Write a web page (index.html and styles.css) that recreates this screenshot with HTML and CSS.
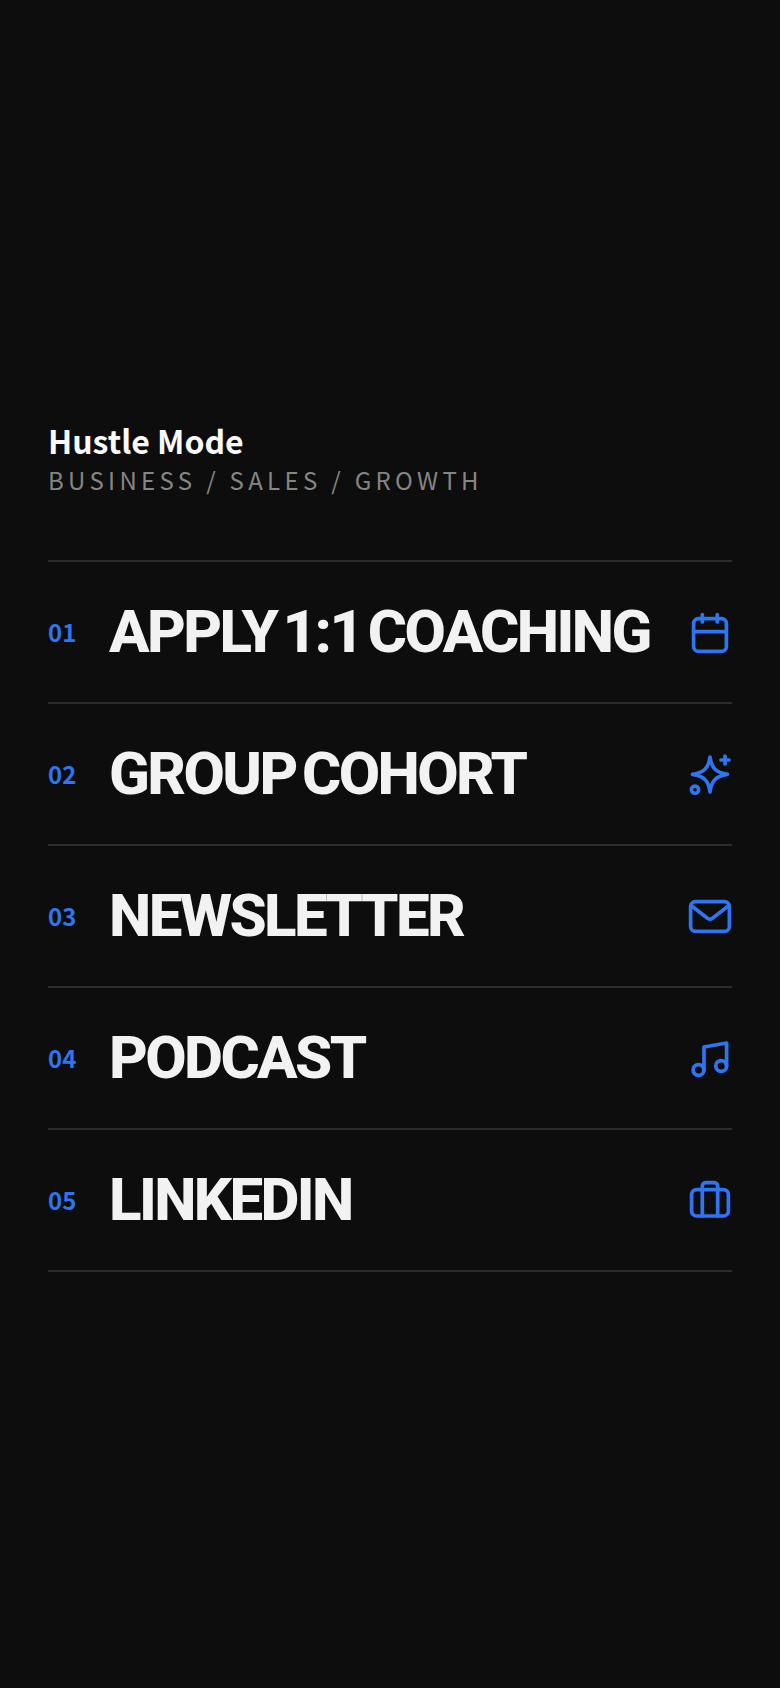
FILE: index.html
```html
<!DOCTYPE html>
<html lang="en">
<head>
<meta charset="utf-8">
<title>Hustle Mode</title>
<link rel="stylesheet" href="styles.css">
</head>
<body>
<main class="page">
  <header class="intro">
    <h1 class="name">Hustle Mode</h1>
    <p class="tags">BUSINESS / SALES / GROWTH</p>
  </header>
  <nav class="links">
    <a class="row" href="#">
      <span class="num">01</span>
      <span class="label">APPLY 1:1 COACHING</span>
      <svg class="icon" viewBox="0 0 44 44"><rect x="5.6" y="8.6" width="32.8" height="32.8" rx="5"/><path d="M14.3 4.5V12M29.3 4.5V12M5.6 21.7H38.4"/></svg>
    </a>
    <a class="row" href="#">
      <span class="num">02</span>
      <span class="label">GROUP COHORT</span>
      <svg class="icon" viewBox="0 0 44 44"><path d="M22 5C23.4 15.5 27.5 20.8 39.5 22.3C27.5 24 23.4 29 22 40C20.6 29 16.5 24 4.5 22.3C16.5 20.8 20.6 15.5 22 5Z"/><path d="M37 4V12M33 8H41"/><circle cx="7" cy="37.7" r="3.6"/></svg>
    </a>
    <a class="row" href="#">
      <span class="num">03</span>
      <span class="label">NEWSLETTER</span>
      <svg class="icon" viewBox="0 0 44 44"><rect x="2.6" y="7.6" width="38.8" height="29.8" rx="5"/><path d="M3.7 12L19.5 24.2Q22 26 24.5 24.2L40.3 12"/></svg>
    </a>
    <a class="row" href="#">
      <span class="num">04</span>
      <span class="label">PODCAST</span>
      <svg class="icon" viewBox="0 0 44 44"><path d="M16 34V11L38.6 7V30"/><circle cx="10.5" cy="34" r="5.4"/><circle cx="33.2" cy="30" r="5.4"/></svg>
    </a>
    <a class="row" href="#">
      <span class="num">05</span>
      <span class="label">LINKEDIN</span>
      <svg class="icon" viewBox="0 0 44 44"><rect x="3.6" y="11.6" width="36.8" height="26.4" rx="5"/><path d="M14.3 38V8A3.4 3.4 0 0 1 17.7 4.6H26.3A3.4 3.4 0 0 1 29.7 8V38"/></svg>
    </a>
  </nav>
</main>
</body>
</html>
```
FILE: styles.css
```css
* { box-sizing: border-box; }
html, body { margin: 0; }
body {
  background: #0d0d0d;
  font-family: "Noto Sans CJK JP", "Noto Sans", sans-serif;
  color: #f2f2f2;
}
.page {
  height: 1688px;
  padding: 0 48px;
  display: flex;
  flex-direction: column;
  justify-content: center;
}
.intro { margin-bottom: 64px; }
.name {
  margin: 0;
  font-size: 32px;
  font-weight: 700;
  line-height: 48px;
  color: #fafafa;
}
.tags {
  margin: 0;
  font-size: 24px;
  font-weight: 400;
  line-height: 32px;
  letter-spacing: 4.32px;
  color: #858585;
}
.links { border-top: 2px solid #2c2c2c; }
.row {
  display: flex;
  align-items: center;
  height: 142px;
  border-bottom: 2px solid #2c2c2c;
  text-decoration: none;
  color: inherit;
}
.num {
  width: 61px;
  padding-bottom: 2px;
  font-size: 24px;
  font-weight: 700;
  color: #2f74f0;
}
.label {
  flex: 1;
  font-family: "Roboto", "Liberation Sans", sans-serif;
  font-size: 60px;
  font-weight: 800;
  line-height: 1;
  letter-spacing: -2.6px;
  word-spacing: -6px;
  color: #f2f2f2;
}
.icon {
  width: 44px;
  height: 44px;
  flex: none;
  fill: none;
  stroke: #2f74f0;
  stroke-width: 3.7;
  stroke-linecap: round;
  stroke-linejoin: round;
}
```
